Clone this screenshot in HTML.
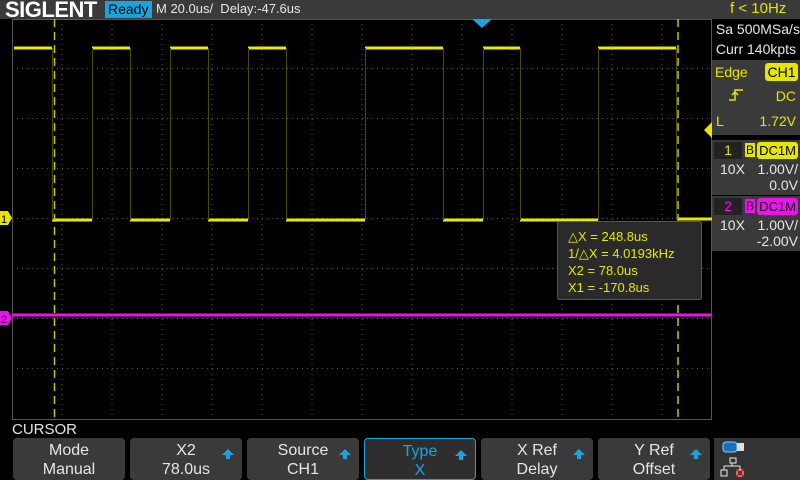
<!DOCTYPE html>
<html><head><style>
body{margin:0;background:#000;width:800px;height:480px;overflow:hidden;font-family:"Liberation Sans",sans-serif;position:relative}
.a{position:absolute}
.btn{position:absolute;top:438px;height:42px;width:112px;background:#3a3a3a;border-radius:4px;color:#e6e6e6;font-size:16px;text-align:center;line-height:19px;box-sizing:border-box;padding-top:3px}
.arr{position:absolute;right:8px;top:11px;width:0;height:0;border-left:6px solid transparent;border-right:6px solid transparent;border-bottom:6px solid #1aa3dc}
.arr:after{content:"";position:absolute;left:-2px;top:6px;width:4px;height:4px;background:#1aa3dc}
.rp{position:absolute;left:712px;width:88px;color:#e6e600;font-size:14px}
</style></head><body>
<div class="a" style="left:0;top:0;width:800px;height:19px;background:#3a3a3a"></div>
<div class="a" style="left:5px;top:-3px;font-size:22px;font-weight:bold;color:#fff;letter-spacing:-0.5px">SIGLENT</div>
<div class="a" style="left:105px;top:1px;width:44px;height:17px;background:#1aa3dc;color:#000;font-size:14px;line-height:17px;padding-left:3px">Ready</div>
<div class="a" style="left:156px;top:1px;font-size:13px;color:#e6e6e6">M 20.0us/&nbsp; Delay:-47.6us</div>
<div class="a" style="left:730px;top:0px;font-size:15px;color:#e6e600">f &lt; 10Hz</div>
<svg class="a" style="left:0;top:0" width="800" height="480">
<g stroke="#555" stroke-width="1" stroke-dasharray="1,4">
<path d="M62 19V419M112 19V419M162 19V419M212 19V419M262 19V419M312 19V419M362 19V419M412 19V419M462 19V419M512 19V419M562 19V419M612 19V419M662 19V419"/>
<path d="M12 68.5H712M12 118.5H712M12 168.5H712M12 218.5H712M12 268.5H712M12 318.5H712M12 368.5H712"/>
</g>
<rect x="12.5" y="19.5" width="699" height="400" fill="none" stroke="#555"/>
<g fill="none" stroke="#e8e800" stroke-width="3">
<path d="M14 48H52M92 48H130M170 48H208M248 48H286M365 48H443M483 48H520M598 48H676"/>
<path d="M52 220H92M130 220H170M208 220H248M286 220H365M443 220H483M520 220H598M678 219H712"/>
</g>
<g stroke="#4a4a00" stroke-width="1">
<path d="M52.5 48V220M92.5 48V220M130.5 48V220M170.5 48V220M208.5 48V220M248.5 48V220M286.5 48V220M365.5 48V220M443.5 48V220M483.5 48V220M520.5 48V220M598.5 48V220M676.5 48V220"/>
</g>
<path d="M12 315H712" stroke="#ee10ee" stroke-width="3"/>
<g stroke="#c8c800" stroke-width="1.5" stroke-dasharray="8,5"><path d="M54.5 19V419M678 19V419"/></g>
<path d="M472 19L492 19L482 28Z" fill="#1aa3dc"/>
<path d="M0 211H8L12 218L8 225H0Z" fill="#e6e600"/><text x="1" y="223" font-size="11" fill="#000" font-family="Liberation Sans">1</text>
<path d="M0 311H8L12 318L8 325H0Z" fill="#ee10ee"/><text x="1" y="323" font-size="11" fill="#000" font-family="Liberation Sans">2</text>
<path d="M712 122L704 130L712 138Z" fill="#e6e600"/>
<rect x="557.5" y="221.5" width="144" height="78" rx="2" fill="#2a2a2a" stroke="#555"/>
<g fill="#e6e600" font-size="13" font-family="Liberation Sans">
<text x="568" y="241">△X = 248.8us</text>
<text x="568" y="258">1/△X = 4.0193kHz</text>
<text x="568" y="275">X2 = 78.0us</text>
<text x="568" y="292">X1 = -170.8us</text>
</g>
</svg>
<div class="a" style="left:712px;top:19px;width:88px;height:40px;background:#000"></div>
<div class="rp" style="top:21px;color:#e6e6e6">&nbsp;Sa 500MSa/s</div>
<div class="rp" style="top:41px;color:#e6e6e6">&nbsp;Curr 140kpts</div>
<div class="a" style="left:712px;top:60px;width:88px;height:75px;background:#3a3a3a"></div>
<div class="rp" style="top:64px;left:715px">Edge</div>
<div class="a" style="left:765px;top:63px;width:33px;height:18px;background:#e6e600;border-radius:3px;color:#000;font-size:14px;text-align:center;line-height:18px">CH1</div>
<svg class="a" style="left:728px;top:88px" width="16" height="14"><path d="M1 12H7V2H15M4 7L7 4L10 7" fill="none" stroke="#e6e600" stroke-width="1.5"/></svg>
<div class="rp" style="top:88px;text-align:right;width:84px">DC</div>
<div class="rp" style="top:113px;left:716px">L</div>
<div class="rp" style="top:113px;text-align:right;width:84px">1.72V</div>
<div class="a" style="left:712px;top:140px;width:88px;height:55px;background:#3a3a3a"></div>
<div class="a" style="left:714px;top:142px;width:28px;height:17px;background:#222;color:#e6e600;font-size:14px;text-align:center">1</div>
<div class="a" style="left:745px;top:143px;width:10px;height:14px;background:#e6e600;color:#000;font-size:12px;text-align:center;line-height:14px">B</div>
<div class="a" style="left:757px;top:142px;width:41px;height:17px;background:#e6e600;border-radius:3px;color:#000;font-size:13px;text-align:center;line-height:17px">DC1M</div>
<div class="rp" style="top:161px;left:720px;color:#e6e6e6">10X</div>
<div class="rp" style="top:161px;text-align:right;width:86px;color:#e6e6e6">1.00V/</div>
<div class="rp" style="top:177px;text-align:right;width:86px;color:#e6e6e6">0.0V</div>
<div class="a" style="left:712px;top:196px;width:88px;height:55px;background:#3a3a3a"></div>
<div class="a" style="left:714px;top:198px;width:28px;height:17px;background:#222;color:#ee10ee;font-size:14px;text-align:center">2</div>
<div class="a" style="left:745px;top:199px;width:10px;height:14px;background:#ee10ee;color:#000;font-size:12px;text-align:center;line-height:14px">B</div>
<div class="a" style="left:757px;top:198px;width:41px;height:17px;background:#ee10ee;border-radius:3px;color:#000;font-size:13px;text-align:center;line-height:17px">DC1M</div>
<div class="rp" style="top:217px;left:720px;color:#e6e6e6">10X</div>
<div class="rp" style="top:217px;text-align:right;width:86px;color:#e6e6e6">1.00V/</div>
<div class="rp" style="top:233px;text-align:right;width:86px;color:#e6e6e6">-2.00V</div>
<div class="a" style="left:12px;top:421px;color:#e6e6e6;font-size:15px">CURSOR</div>
<div class="btn" style="left:13px">Mode<br>Manual</div>
<div class="btn" style="left:130px">X2<br>78.0us<div class="arr"></div></div>
<div class="btn" style="left:247px">Source<br>CH1<div class="arr"></div></div>
<div class="btn" style="left:364px;border:1px solid #1aa3dc;color:#1aa3dc;background:#2e2e2e">Type<br>X<div class="arr"></div></div>
<div class="btn" style="left:481px">X Ref<br>Delay<div class="arr"></div></div>
<div class="btn" style="left:598px">Y Ref<br>Offset<div class="arr"></div></div>
<div class="a" style="left:714px;top:438px;width:86px;height:42px;background:#333"></div>
<svg class="a" style="left:720px;top:440px" width="30" height="40">
<rect x="3" y="2" width="14" height="10" rx="3" fill="#1a70c0" stroke="#8cf"/>
<rect x="17" y="3" width="7" height="8" fill="#ddd"/>
<path d="M10 18h6v5h-6zM12 23v3M4 26h16M4 26v4M20 26v4M1 30h6v6h-6zM17 30h6v6h-6z" fill="none" stroke="#eee"/>
<path d="M16 29l8 8M24 29l-8 8" stroke="#e00" stroke-width="1.5"/>
</svg>
</body></html>
